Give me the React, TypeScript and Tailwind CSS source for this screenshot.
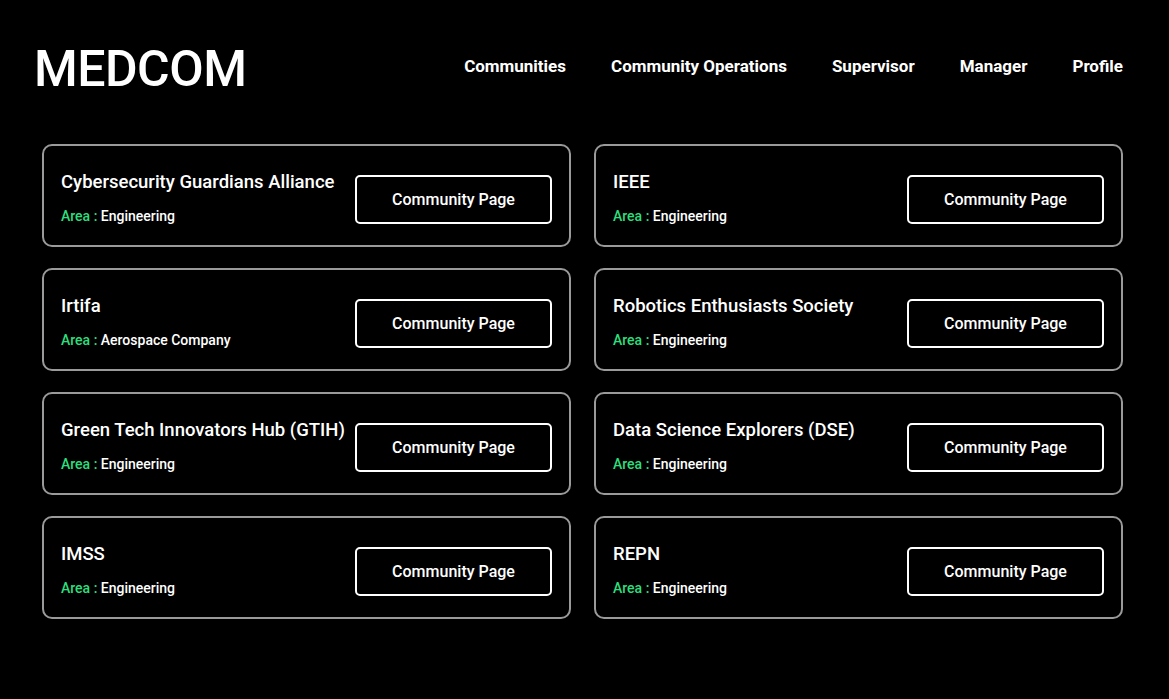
import React from "react";

const communities = [
  { name: "Cybersecurity Guardians Alliance", area: "Engineering" },
  { name: "IEEE", area: "Engineering" },
  { name: "Irtifa", area: "Aerospace Company" },
  { name: "Robotics Enthusiasts Society", area: "Engineering" },
  { name: "Green Tech Innovators Hub (GTIH)", area: "Engineering" },
  { name: "Data Science Explorers (DSE)", area: "Engineering" },
  { name: "IMSS", area: "Engineering" },
  { name: "REPN", area: "Engineering" },
];

const navItems = ["Communities", "Community Operations", "Supervisor", "Manager", "Profile"];

function CommunityCard({ name, area }: { name: string; area: string }) {
  return (
    <div className="flex h-[103px] items-start justify-between rounded-[10px] border-2 border-[#9a9a9a] px-[17px]">
      <div className="mt-[25px] flex flex-col gap-[15px]">
        <p className="text-[18.5px] font-medium leading-[22px] text-white">{name}</p>
        <p className="text-[14px] font-medium leading-[16px] text-white">
          <span className="text-[#2bdf7d]">Area :</span> {area}
        </p>
      </div>
      <button
        type="button"
        className="mt-[29px] h-[49px] w-[197px] rounded-[5px] border-2 border-white text-[16px] font-medium text-white"
      >
        Community Page
      </button>
    </div>
  );
}

export default function App() {
  return (
    <div className="min-h-[699px] bg-black font-['Roboto',sans-serif] text-white">
      <header className="flex items-start justify-between pl-[34px] pr-[46px] pt-[40px]">
        <h1 className="text-[50px] font-medium leading-[58px] tracking-[-0.5px]">MEDCOM</h1>
        <nav className="flex gap-[45px] pt-[16px]">
          {navItems.map((item) => (
            <a key={item} className="text-[17px] font-bold leading-[20px] text-white">
              {item}
            </a>
          ))}
        </nav>
      </header>
      <main className="grid grid-cols-2 gap-x-[23px] gap-y-[21px] pl-[42px] pr-[46px] pt-[46px]">
        {communities.map((c) => (
          <CommunityCard key={c.name} name={c.name} area={c.area} />
        ))}
      </main>
    </div>
  );
}
